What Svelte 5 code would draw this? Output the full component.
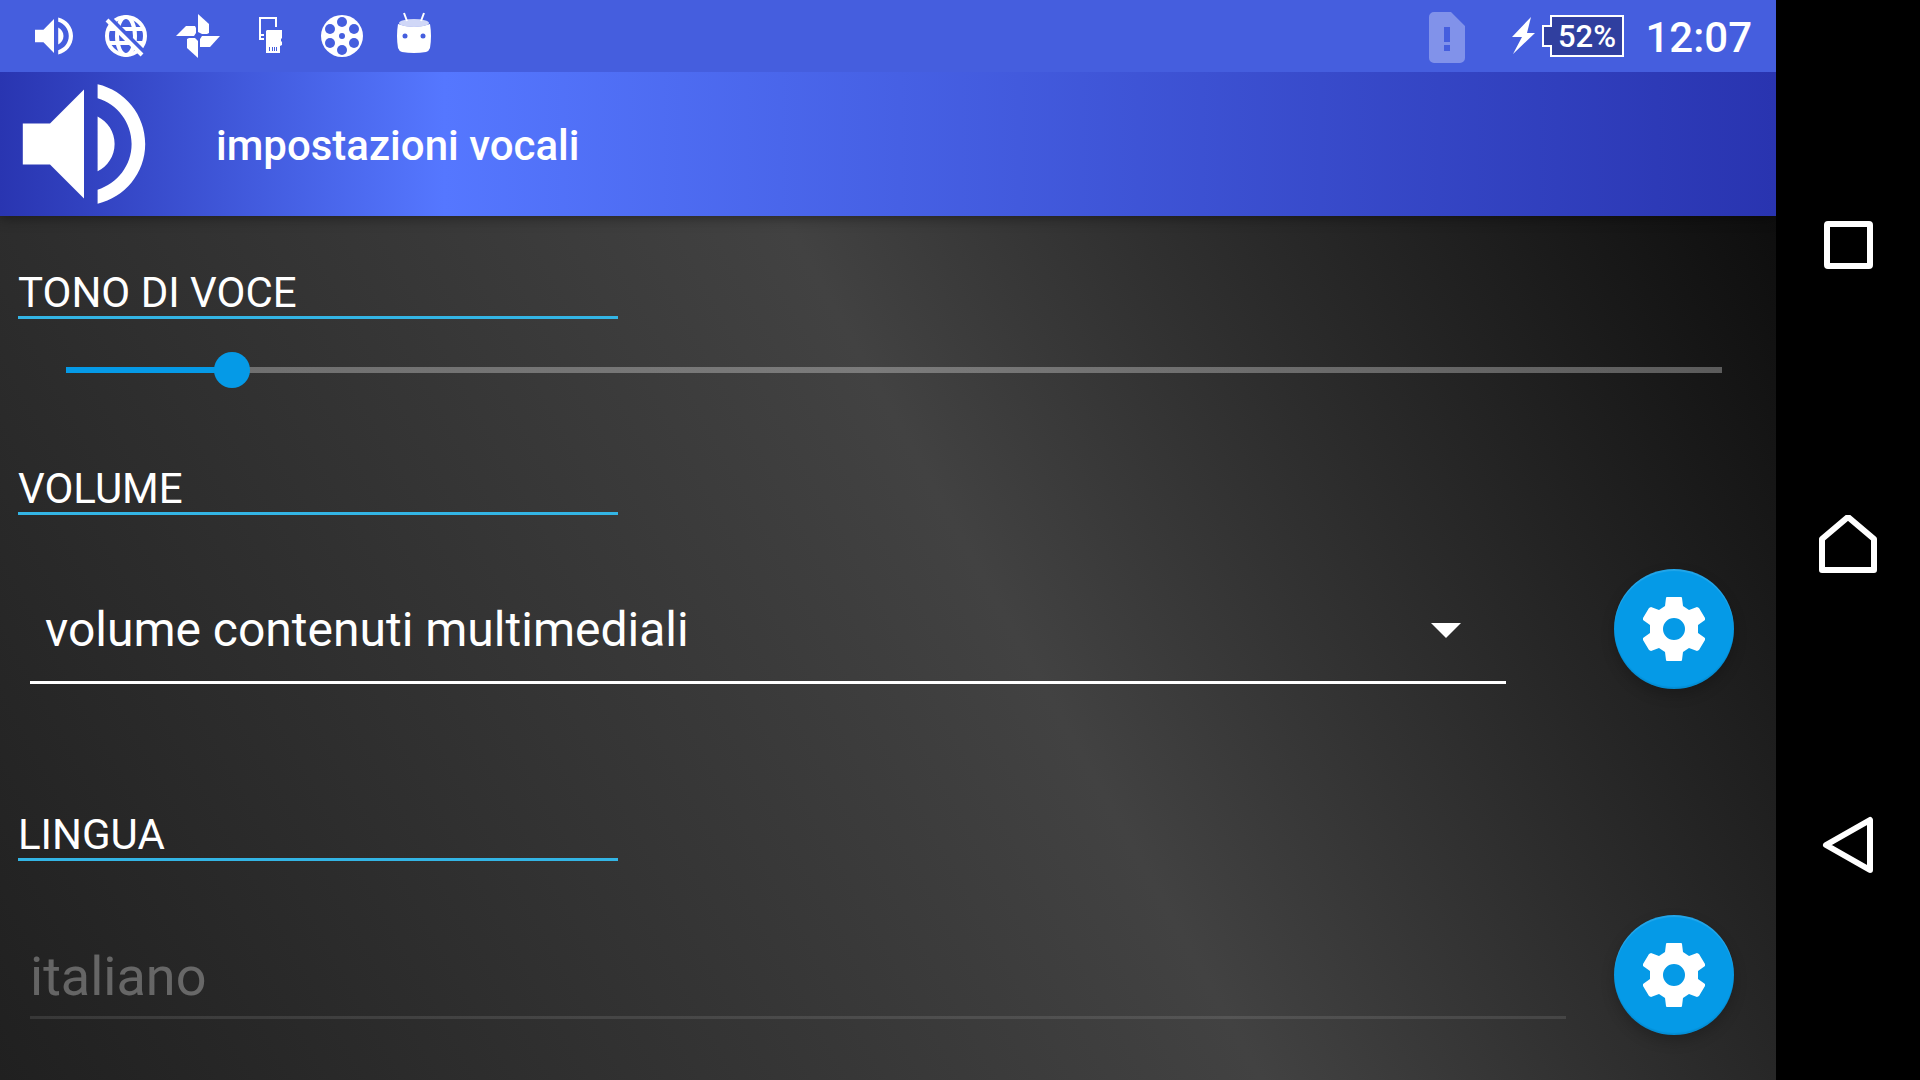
<script lang="ts">
	let pitch = $state(10);
	let stream = $state('media');
	let language = $state('italiano');

	const streams = [
		{ value: 'media', label: 'volume contenuti multimediali' },
		{ value: 'ring', label: 'volume suoneria' },
		{ value: 'alarm', label: 'volume sveglia' }
	];

	const reelHoles = [
		[36, 22],
		[48, 29],
		[48, 43],
		[36, 50],
		[24, 43],
		[24, 29]
	];

	const speakerPath =
		'M3 9v6h4l5 5V4L7 9H3zm13.5 3c0-1.77-1.02-3.29-2.5-4.03v8.05c1.48-.73 2.5-2.25 2.5-4.02zM14 3.23v2.06c2.89.86 5 3.54 5 6.71s-2.11 5.85-5 6.71v2.06c4.01-.91 7-4.49 7-8.77s-2.99-7.86-7-8.77z';
</script>

{#snippet gear()}
	<svg class="gear" viewBox="0 0 64 64" aria-hidden="true">
		<path
			fill-rule="evenodd"
			d="M25 0h14a1 1 0 0 1 1 1l1 8 6 4 8-3 2 1 6 10v2l-7 5v8l7 5v2l-6 10-2 1-8-3-6 4-1 8a1 1 0 0 1-1 1H25a1 1 0 0 1-1-1l-1-8-6-4-8 3-2-1-6-10v-2l7-5v-8l-7-5v-2l6-10 2-1 8 3 6-4 1-8a1 1 0 0 1 1-1zM32 21a11 11 0 1 0 0 22 11 11 0 0 0 0-22z"
		/>
	</svg>
{/snippet}

<div class="device">
	<div class="screen">
		<div class="status-bar">
			<div class="notifications">
				<svg viewBox="0 0 72 72" aria-hidden="true">
					<path transform="translate(36 36) scale(2.11) translate(-12 -12)" d={speakerPath} />
				</svg>
				<svg viewBox="0 0 72 72" aria-hidden="true">
					<g class="line">
						<circle cx="36" cy="36" r="19" stroke-width="4" />
						<ellipse cx="36" cy="36" rx="9" ry="19" stroke-width="4" />
						<path d="M18 29h36M18 43h36" stroke-width="4" />
					</g>
					<path class="gap" d="M17 15l40 40" />
					<path class="line" d="M17 20l35 35" stroke-width="4" />
				</svg>
				<svg viewBox="0 0 72 72" aria-hidden="true">
					<path d="M36 14l11 10v9l-2 1h-5l-4-2z" />
					<path d="M14 36l10-10h9l1 2v5l-2 3z" />
					<path d="M36 58L25 48V39l2-1h6l3 3z" />
					<path d="M58 36L48 47H38V39l2-3z" />
				</svg>
				<svg viewBox="0 0 72 72" aria-hidden="true">
					<path class="line" d="M42 27v-9H26v21h4M26 35h4" stroke-width="2" />
					<path
						fill-rule="evenodd"
						d="M33 30h15v8l-1 1v2l1 1v3l-2 1v7H32V31zM35 47v4h1v-4zm3 0v4h1v-4zm2 0v4h1v-4zm2 0v4h1v-4z"
					/>
				</svg>
				<svg viewBox="0 0 72 72" aria-hidden="true">
					<circle cx="36" cy="36" r="21" />
					{#each reelHoles as [cx, cy]}
						<circle class="hole" {cx} {cy} r="5" />
					{/each}
					<circle class="hole" cx="36" cy="36" r="3" />
				</svg>
				<svg viewBox="0 0 72 72" aria-hidden="true">
					<path d="M20 24q16 6 32 0 2 12 0 24-1 3-4 4-12 2-24 0-3-1-4-4-2-12 0-24z" />
					<ellipse class="lid" cx="36" cy="23" rx="15" ry="4" />
					<path class="line" d="M26 13l3 8M46 13l-3 8" stroke-width="2" />
					<circle class="hole" cx="27" cy="36" r="2.5" />
					<circle class="hole" cx="45" cy="36" r="2.5" />
				</svg>
			</div>

			<div class="system">
				<svg class="sim" viewBox="0 0 36 51" aria-hidden="true">
					<path
						fill-rule="evenodd"
						d="M5 0h17l14 14v32a5 5 0 0 1-5 5H5a5 5 0 0 1-5-5V5a5 5 0 0 1 5-5zM15 15v15h6V15zM15 33v6h6v-6z"
					/>
				</svg>
				<svg class="bolt" viewBox="0 0 24 38" aria-hidden="true">
					<path d="M19 0L0 20h10L1 37l22-21h-8z" />
				</svg>
				<svg class="battery" viewBox="0 0 82 42" role="img" aria-label="Batteria 52%">
					<path d="M9 1h72v40H9V31H1V11h8z" />
					<text x="45" y="32" text-anchor="middle">52%</text>
				</svg>
				<time class="clock">12:07</time>
			</div>
		</div>

		<header class="app-bar">
			<svg class="app-icon" viewBox="2 2 20 20" aria-hidden="true">
				<path d={speakerPath} />
			</svg>
			<h1>impostazioni vocali</h1>
		</header>

		<main class="settings">
			<section>
				<label class="section-title" for="pitch">TONO DI VOCE</label>
				<input
					id="pitch"
					class="slider"
					type="range"
					min="0"
					max="100"
					bind:value={pitch}
					style="--fill: {pitch}%"
				/>
			</section>

			<section>
				<label class="section-title" for="stream">VOLUME</label>
				<div class="row">
					<div class="spinner">
						<select id="stream" bind:value={stream}>
							{#each streams as option}
								<option value={option.value}>{option.label}</option>
							{/each}
						</select>
					</div>
					<button class="fab" type="button" aria-label="Impostazioni volume">
						{@render gear()}
					</button>
				</div>
			</section>

			<section>
				<label class="section-title" for="language">LINGUA</label>
				<div class="row row-text">
					<input id="language" class="text-field" type="text" bind:value={language} disabled />
					<button class="fab" type="button" aria-label="Impostazioni lingua">
						{@render gear()}
					</button>
				</div>
			</section>
		</main>
	</div>

	<nav class="nav-bar">
		<button type="button" aria-label="Recenti">
			<svg viewBox="0 0 60 60" aria-hidden="true">
				<rect x="9" y="9" width="43" height="42" rx="1" />
			</svg>
		</button>
		<button type="button" aria-label="Home">
			<svg viewBox="0 0 60 60" aria-hidden="true">
				<path d="M4 24L30 2l26 22v31H4z" />
			</svg>
		</button>
		<button type="button" aria-label="Indietro">
			<svg viewBox="0 0 60 60" aria-hidden="true">
				<path d="M52 5v50L8 30z" />
			</svg>
		</button>
	</nav>
</div>

<style>
	:global(body) {
		margin: 0;
		background: #000;
	}

	.device {
		--blue: #455ede;
		--accent: #059ae7;
		display: flex;
		min-height: 100vh;
		font-family: Roboto, 'Liberation Sans', sans-serif;
		color: #fff;
		background: #000;
	}

	.screen {
		flex: 1;
		min-width: 0;
		display: flex;
		flex-direction: column;
	}

	button {
		padding: 0;
		border: 0;
		cursor: pointer;
	}

	/* Status bar */
	.status-bar {
		position: relative;
		z-index: 2;
		display: flex;
		justify-content: space-between;
		height: 72px;
		padding: 0 24px 0 18px;
		background: var(--blue);
	}

	.notifications,
	.system {
		display: flex;
		align-items: center;
	}

	.notifications svg {
		width: 72px;
		height: 72px;
		fill: #fff;
	}

	.notifications .line {
		fill: none;
		stroke: #fff;
	}

	.notifications .gap {
		fill: none;
		stroke: var(--blue);
		stroke-width: 4;
	}

	.notifications .hole {
		fill: var(--blue);
	}

	.notifications .lid {
		fill: #d0d7f7;
	}

	.sim {
		width: 36px;
		height: 51px;
		margin-right: 47px;
		padding-top: 3px;
		fill: #8192ea;
	}

	.bolt {
		width: 24px;
		height: 38px;
		margin-right: 6px;
		fill: #fff;
	}

	.battery {
		width: 82px;
		height: 42px;
		margin-right: 21px;
	}

	.battery path {
		fill: #303f9f;
		stroke: #fff;
		stroke-width: 2;
	}

	.battery text {
		fill: #fff;
		font-size: 31px;
		font-weight: 500;
	}

	.clock {
		padding-top: 3px;
		font-size: 42px;
		line-height: 48px;
		font-weight: 500;
	}

	/* App bar */
	.app-bar {
		position: relative;
		z-index: 1;
		display: flex;
		align-items: center;
		gap: 64px;
		height: 144px;
		padding: 0 16px;
		background: linear-gradient(90deg, #2935b1, #5577ff 25%, #2934b0);
		box-shadow: 0 2px 12px rgba(0, 0, 0, 0.4);
	}

	.app-icon {
		width: 136px;
		height: 136px;
		fill: #fff;
	}

	h1 {
		margin: 0;
		padding-top: 3px;
		font-size: 42px;
		line-height: 48px;
		font-weight: 500;
	}

	/* Settings */
	.settings {
		flex: 1;
		display: flex;
		flex-direction: column;
		gap: 76px;
		padding: 52px 42px 0 18px;
		background: linear-gradient(61deg, #202020, #424242 56%, #0e0e0e);
	}

	.section-title {
		display: block;
		width: 600px;
		max-width: 100%;
		padding-top: 2px;
		border-bottom: 3px solid #33b5e5;
		font-size: 42px;
		line-height: 46px;
	}

	.slider {
		display: block;
		appearance: none;
		width: calc(100% - 24px);
		height: 36px;
		margin: 33px 0 0 30px;
		background: transparent;
	}

	.slider::-webkit-slider-runnable-track {
		height: 36px;
		background:
			linear-gradient(
					90deg,
					var(--accent) var(--fill),
					rgba(255, 255, 255, 0.3) var(--fill)
				)
				center / calc(100% - 36px) 6px no-repeat;
	}

	.slider::-webkit-slider-thumb {
		appearance: none;
		width: 36px;
		height: 36px;
		border-radius: 50%;
		background: var(--accent);
	}

	.row {
		display: flex;
		align-items: center;
		gap: 108px;
		padding: 54px 0 45px 12px;
	}

	.row-text {
		gap: 48px;
	}

	.spinner {
		position: relative;
		flex: 1;
		min-width: 0;
	}

	.spinner::after {
		content: '';
		position: absolute;
		top: 49px;
		right: 45px;
		border: 15px solid transparent;
		border-top-color: #fff;
		border-bottom-width: 0;
		pointer-events: none;
	}

	select,
	.text-field {
		display: block;
		box-sizing: border-box;
		width: 100%;
		border: 0;
		border-bottom: 3px solid #fff;
		border-radius: 0;
		background: transparent;
		font-family: inherit;
	}

	select {
		appearance: none;
		height: 110px;
		padding: 4px 80px 0 15px;
		color: #fff;
		font-size: 48px;
	}

	select option {
		background: #303030;
	}

	.text-field {
		flex: 1;
		min-width: 0;
		height: 88px;
		padding: 6px 0 0;
		border-bottom-color: rgba(255, 255, 255, 0.1);
		color: rgba(255, 255, 255, 0.3);
		font-size: 54px;
	}

	.fab {
		display: grid;
		place-items: center;
		flex: none;
		width: 120px;
		height: 120px;
		border-radius: 50%;
		background: var(--accent);
		box-shadow:
			inset 0 2px 1px rgba(255, 255, 255, 0.12),
			inset 0 -2px 1px rgba(0, 0, 0, 0.08),
			0 6px 14px rgba(0, 0, 0, 0.2);
	}

	.gear {
		width: 64px;
		height: 64px;
		fill: #fff;
	}

	/* Navigation bar */
	.nav-bar {
		display: flex;
		flex-direction: column;
		justify-content: center;
		flex: none;
		width: 144px;
		padding-top: 10px;
		box-sizing: border-box;
	}

	.nav-bar button {
		display: grid;
		place-items: center;
		height: 300px;
		background: transparent;
	}

	.nav-bar svg {
		width: 60px;
		height: 60px;
		fill: none;
		stroke: #fff;
		stroke-width: 6;
		stroke-linejoin: round;
	}
</style>
